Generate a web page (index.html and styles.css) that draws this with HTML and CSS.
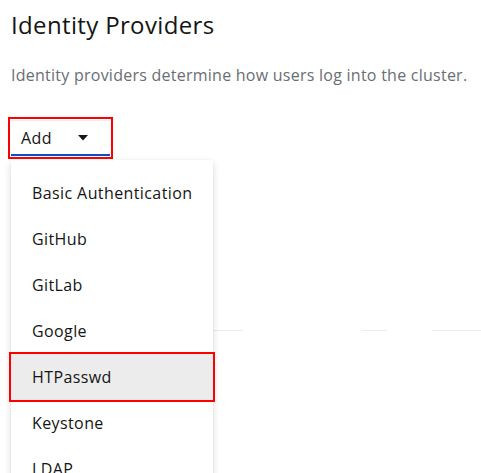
FILE: index.html
```html
<!DOCTYPE html>
<html>
<head>
<meta charset="utf-8">
<link rel="stylesheet" href="styles.css">
</head>
<body>
<div class="page">
  <h1 class="title">Identity Providers</h1>
  <p class="desc">Identity providers determine how users log into the cluster.</p>
  <div class="dropdown">
    <button class="toggle" type="button">
      <span class="toggle-text">Add</span>
      <svg class="caret" width="10" height="6" viewBox="0 0 10 6"><path d="M0 0 H10 L5 5.5 Z" fill="#151515"/></svg>
    </button>
    <ul class="menu">
      <li class="item">Basic Authentication</li>
      <li class="item">GitHub</li>
      <li class="item">GitLab</li>
      <li class="item">Google</li>
      <li class="item item-active">HTPasswd</li>
      <li class="item">Keystone</li>
      <li class="item">LDAP</li>
    </ul>
  </div>
  <div class="table-head">
    <span class="cell cell-a"></span>
    <span class="cell cell-b"></span>
    <span class="cell cell-c"></span>
  </div>
</div>
</body>
</html>
```
FILE: styles.css
```css
html, body {
  margin: 0;
  padding: 0;
  background: #fff;
}
body {
  font-family: "Open Sans", "Liberation Sans", sans-serif;
  color: #151515;
  overflow: hidden;
  height: 473px;
}
.page {
  position: relative;
  padding: 9px 0 0 11px;
}
.title {
  margin: 0;
  font-size: 24px;
  font-weight: 400;
  letter-spacing: 0.35px;
  line-height: 32px;
  color: #151515;
}
.desc {
  margin: 22px 0 0;
  font-size: 16px;
  letter-spacing: 0.25px;
  line-height: 24px;
  color: #6a6e73;
}
.dropdown {
  position: relative;
  margin-top: 33px;
}
.toggle {
  display: flex;
  align-items: center;
  width: 99px;
  height: 36px;
  padding: 0 0 0 10px;
  margin: 0;
  border: 0;
  border-top: 1px solid #f0f0f0;
  border-bottom: 2px solid #0b4fc8;
  background: #fff;
  font-family: inherit;
  font-size: 16px;
  letter-spacing: 0.4px;
  color: #151515;
  box-sizing: border-box;
  outline: 2px solid #f00;
  outline-offset: 1px;
}
.toggle-text {
  width: 57px;
  text-align: left;
}
.caret {
  display: block;
}
.menu {
  position: absolute;
  left: 0;
  top: 40px;
  width: 202px;
  margin: 0;
  padding: 10px 0 0;
  list-style: none;
  background: #fff;
  box-shadow: 0 4px 8px rgba(3, 3, 3, 0.12), 0 0 4px rgba(3, 3, 3, 0.06);
  z-index: 2;
}
.item {
  height: 46px;
  line-height: 46px;
  padding-left: 21px;
  font-size: 16px;
  letter-spacing: 0.4px;
  color: #151515;
  white-space: nowrap;
}
.item-active {
  background: #ececec;
  outline: 2px solid #f00;
  outline-offset: 0;
}
.table-head {
  display: flex;
  margin: 174px 0 0 202px;
}
.cell {
  display: block;
  height: 0;
  border-bottom: 1px solid #ebebeb;
}
.cell-a { width: 30px; }
.cell-b { width: 25px; margin-left: 119px; }
.cell-c { width: 49px; margin-left: 45px; }
```
